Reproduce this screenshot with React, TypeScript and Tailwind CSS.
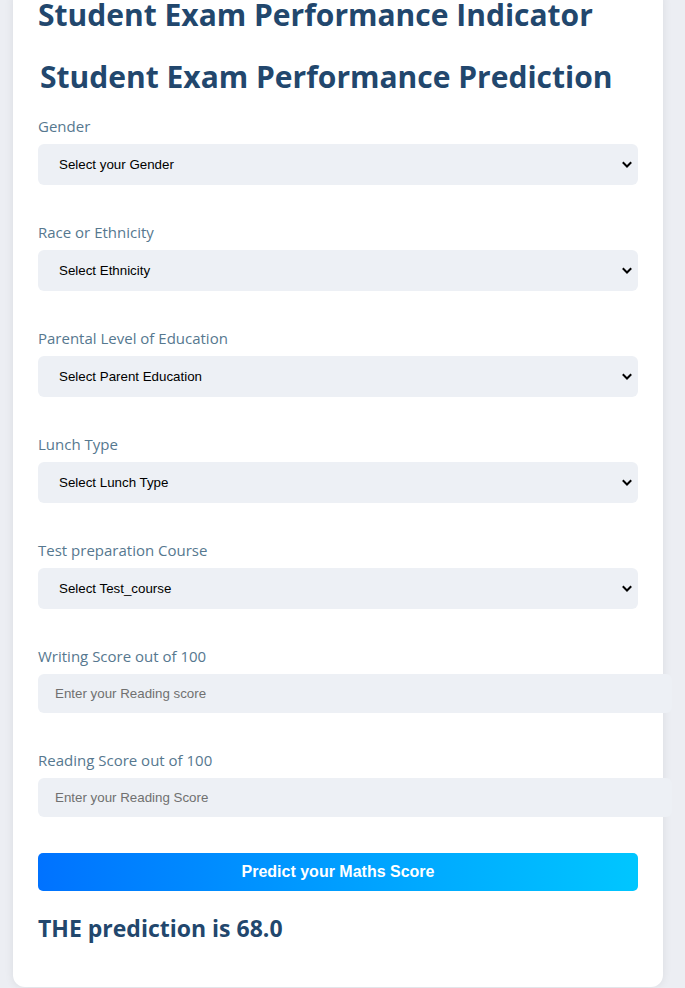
import React from "react";

const selects = [
  { label: "Gender", placeholder: "Select your Gender" },
  { label: "Race or Ethnicity", placeholder: "Select Ethnicity" },
  { label: "Parental Level of Education", placeholder: "Select Parent Education" },
  { label: "Lunch Type", placeholder: "Select Lunch Type" },
  { label: "Test preparation Course", placeholder: "Select Test_course" },
];

const inputs = [
  { label: "Writing Score out of 100", placeholder: "Enter your Reading score" },
  { label: "Reading Score out of 100", placeholder: "Enter your Reading Score" },
];

function Chevron() {
  return (
    <svg
      className="pointer-events-none absolute right-[6px] top-1/2 -translate-y-1/2"
      width="10"
      height="8"
      viewBox="0 0 10 8"
      fill="none"
    >
      <path d="M1.5 2L5 5.5L8.5 2" stroke="#000" strokeWidth="2" strokeLinecap="square" />
    </svg>
  );
}

export default function App() {
  return (
    <div className="min-h-[988px] bg-[#eceef3] overflow-hidden font-['Open_Sans',sans-serif]">
      <div className="ml-[13px] w-[650px] -mt-[5px] bg-white rounded-b-[12px] shadow-[0_0_10px_rgba(0,0,0,0.08)] px-[25px] pb-[44px]">
        <h1 className="text-[30px] leading-[40px] font-bold text-[#22476d]">
          Student Exam Performance Indicator
        </h1>
        <h2 className="mt-[22px] ml-[2px] text-[30px] leading-[40px] font-bold text-[#22476d]">
          Student Exam Performance Prediction
        </h2>
        <div className="mt-[19px] flex flex-col gap-[37px]">
          {selects.map((s) => (
            <div key={s.label} className="flex flex-col">
              <label className="text-[15px] leading-[20px] text-[#56788f] mb-[8px]">{s.label}</label>
              <div className="relative w-[600px]">
                <select
                  defaultValue=""
                  className="appearance-none w-full h-[41px] rounded-[6px] bg-[#edf0f5] pl-[21px] pr-[24px] text-[13.33px] text-black font-['Liberation_Sans',Arial,sans-serif] outline-none"
                >
                  <option value="" disabled>
                    {s.placeholder}
                  </option>
                </select>
                <Chevron />
              </div>
            </div>
          ))}
          {inputs.map((s) => (
            <div key={s.label} className="flex flex-col">
              <label className="text-[15px] leading-[20px] text-[#56788f] mb-[8px]">{s.label}</label>
              <input
                type="number"
                placeholder={s.placeholder}
                className="w-[634px] h-[39px] rounded-[6px] bg-[#edf0f5] px-[17px] text-[13.33px] text-black placeholder:text-[#707070] font-['Liberation_Sans',Arial,sans-serif] outline-none"
              />
            </div>
          ))}
        </div>
        <button className="mt-[36px] w-[600px] h-[38px] rounded-[5px] bg-gradient-to-r from-[#0072ff] to-[#00c6ff] text-white font-bold text-[16px] font-['Liberation_Sans',Arial,sans-serif]">
          Predict your Maths Score
        </button>
        <h3 className="mt-[22px] text-[23px] leading-[30px] font-bold text-[#22476d]">
          THE prediction is 68.0
        </h3>
      </div>
    </div>
  );
}
